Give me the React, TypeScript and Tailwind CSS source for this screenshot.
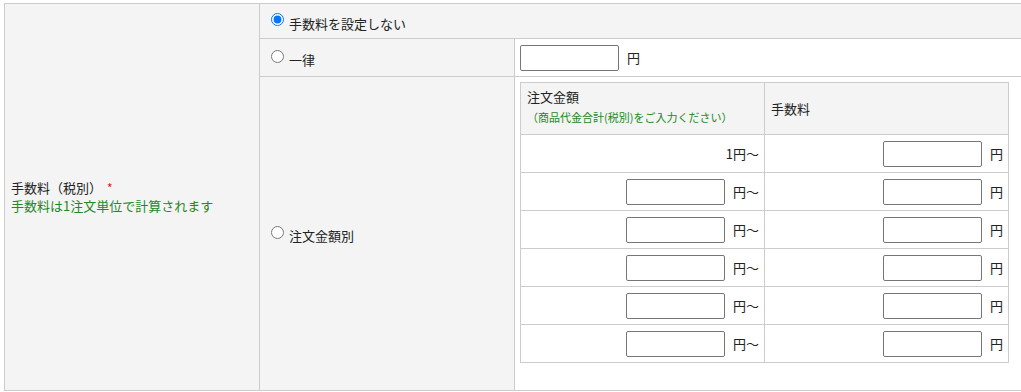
const font = { fontFamily: '"Noto Sans CJK JP", "Noto Sans", sans-serif' };

function YenInput({ suffix }: { suffix: string }) {
  return (
    <div className="flex items-center justify-end pr-[5px] h-full">
      <input
        type="text"
        className="w-[99px] h-[26px] border border-[#767676] rounded-[2px] bg-white"
      />
      <span className="ml-[8px]">{suffix}</span>
    </div>
  );
}

function Radio({ label, checked }: { label: string; checked?: boolean }) {
  return (
    <label className="flex items-center pl-[11px]">
      <input
        type="radio"
        name="fee"
        defaultChecked={checked}
        className="w-[13px] h-[13px] mb-[3px] m-0"
      />
      <span className="ml-[5px] mt-[5px]">{label}</span>
    </label>
  );
}

export default function App() {
  const rows = [0, 1, 2, 3, 4, 5];
  return (
    <div
      className="bg-white w-[1021px] h-[392px] pt-[3px] pl-[4px] text-[13px] text-[#222] overflow-hidden"
      style={font}
    >
      <div className="flex border-t border-l border-b border-[#cccccc] h-[388px]">
        {/* label column */}
        <div className="w-[255px] shrink-0 bg-[#f3f4f3] border-r border-[#cccccc] flex flex-col justify-center pl-[6px] leading-[18px]">
          <div>
            手数料（税別）
            <span className="ml-[5px] text-[12px] text-[#ee1111] align-top">*</span>
          </div>
          <div className="text-[#22891f]">手数料は1注文単位で計算されます</div>
        </div>

        <div className="flex-1 flex flex-col">
          <div className="h-[35px] bg-[#f3f4f3] border-b border-[#cccccc] flex items-center">
            <Radio label="手数料を設定しない" checked />
          </div>

          <div className="h-[38px] flex border-b border-[#cccccc]">
            <div className="w-[255px] shrink-0 bg-[#f3f4f3] border-r border-[#cccccc] flex items-center">
              <Radio label="一律" />
            </div>
            <div className="flex-1 flex items-center pl-[5px]">
              <input
                type="text"
                className="w-[99px] h-[26px] border border-[#767676] rounded-[2px] bg-white"
              />
              <span className="ml-[8px]">円</span>
            </div>
          </div>

          <div className="flex-1 flex">
            <div className="w-[255px] shrink-0 bg-[#f3f4f3] border-r border-[#cccccc] flex items-center">
              <Radio label="注文金額別" />
            </div>
            <div className="flex-1 pl-[5px] pt-[5px]">
              <div className="w-[489px] border-t border-l border-[#cccccc]">
                <div className="flex h-[52px] bg-[#f3f4f3]">
                  <div className="w-[244px] border-r border-b border-[#cccccc] pl-[6px] pt-[5px]">
                    <div className="leading-[18px]">注文金額</div>
                    <div className="mt-[3px] leading-[17px] text-[11px] text-[#22891f]">
                      （商品代金合計(税別)をご入力ください）
                    </div>
                  </div>
                  <div className="w-[244px] border-r border-b border-[#cccccc] pl-[6px] flex items-center">
                    手数料
                  </div>
                </div>
                {rows.map((i) => (
                  <div key={i} className="flex h-[38px] bg-white">
                    <div className="w-[244px] border-r border-b border-[#cccccc]">
                      {i === 0 ? (
                        <div className="flex items-center justify-end h-full pr-[5px]">1円〜</div>
                      ) : (
                        <YenInput suffix="円〜" />
                      )}
                    </div>
                    <div className="w-[244px] border-r border-b border-[#cccccc]">
                      <YenInput suffix="円" />
                    </div>
                  </div>
                ))}
              </div>
            </div>
          </div>
        </div>
      </div>
    </div>
  );
}
